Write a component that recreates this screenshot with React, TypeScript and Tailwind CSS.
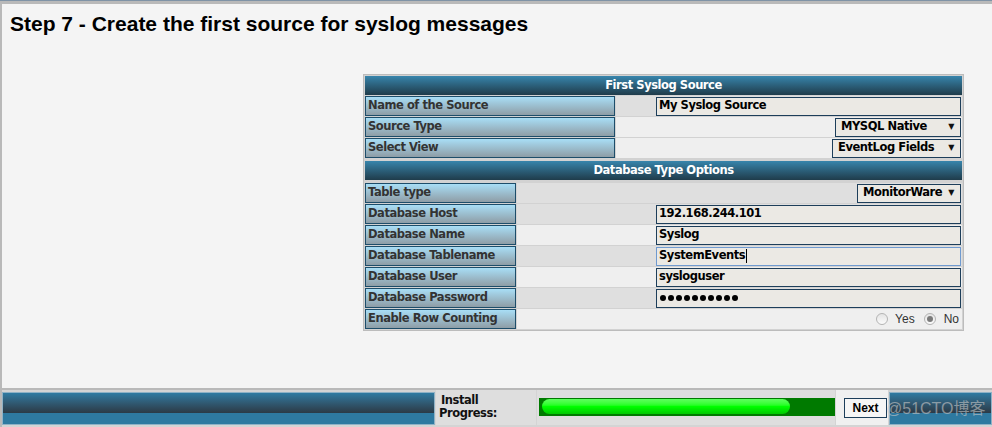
import React from "react";

const LBL = "font-['DejaVu_Sans',sans-serif] font-bold text-[11.5px] tracking-[-0.45px]";

function Header({ children }: { children: React.ReactNode }) {
  return (
    <div className={`h-[19px] flex items-center justify-center bg-linear-to-b from-[#3785ac] to-[#1f3c4b] text-white ${LBL}`}>
      {children}
    </div>
  );
}

function Row({
  label,
  narrow,
  dark,
  children,
}: {
  label: string;
  narrow?: boolean;
  dark?: boolean;
  children?: React.ReactNode;
}) {
  return (
    <div className="flex h-[20px] gap-px">
      <div
        className={`${narrow ? "w-[151px]" : "w-[250px]"} shrink-0 border border-[#1d4d6a] bg-linear-to-b from-[#a8def6] to-[#8e9da6] flex items-center pl-[2px] text-[#333] ${LBL}`}
      >
        {label}
      </div>
      <div className={`flex-1 ${dark ? "bg-[#dfdfdf]" : "bg-[#efefef]"} flex items-center justify-end pr-px`}>
        {children}
      </div>
    </div>
  );
}

function Field({ children, focus }: { children: React.ReactNode; focus?: boolean }) {
  return (
    <div
      className={`w-[305px] h-[19px] border ${focus ? "border-[#6f9ad0]" : "border-[#1d3e5a]"} bg-[#ebe9e4] flex items-center pl-[2px] text-black ${LBL}`}
    >
      {children}
    </div>
  );
}

function Select({ w, children }: { w: string; children: React.ReactNode }) {
  return (
    <div className={`${w} h-[19px] border border-[#1d3e5a] bg-[#ebe9e4] flex items-center justify-between pl-[5px] pr-[6px] text-black ${LBL}`}>
      <span>{children}</span>
      <span className="text-[8px] text-[#111]">▼</span>
    </div>
  );
}

function Radio({ checked }: { checked?: boolean }) {
  return (
    <div className="w-[12px] h-[12px] rounded-full border border-[#b4b4b4] bg-linear-to-b from-[#e4e4e4] to-[#fbfbfb] flex items-center justify-center">
      {checked && <div className="w-[6px] h-[6px] rounded-full bg-[#7a7a7a]" />}
    </div>
  );
}

function BlueBlock({ className }: { className: string }) {
  return (
    <div className={`${className} h-[33px] border border-[#8fb2c6] flex flex-col`}>
      <div className="h-[20px] bg-linear-to-b from-[#2f7ba2] to-[#2b3a46]" />
      <div className="flex-1 bg-[#2e79a0]" />
    </div>
  );
}

export default function App() {
  return (
    <div className="w-[992px] h-[427px] overflow-hidden bg-[#f4f4f4] relative">
      <div className="h-px bg-[#7f93a6]" />
      <div className="h-[3px] bg-[#b9b9b9]" />
      <div className="border-l-2 border-[#b9b9b9]">
        <div className="h-[384px] flex flex-col">
          <div className="pt-[8px] pl-[8px] h-[24px] box-content leading-[24px] font-['Liberation_Sans',Arial,sans-serif] font-bold text-[21px] text-black">
            Step 7 - Create the first source for syslog messages
          </div>
          <div className="ml-[361px] mt-[38px] w-[601px] border border-[#bcbcbc] bg-[#d2d2d2] p-px flex flex-col">
            <Header>First Syslog Source</Header>
            <div className="flex flex-col gap-px mt-px">
              <Row label="Name of the Source" dark>
                <Field>My Syslog Source</Field>
              </Row>
              <Row label="Source Type">
                <Select w="w-[126px]">MYSQL Native</Select>
              </Row>
              <Row label="Select View">
                <Select w="w-[129px]">EventLog Fields</Select>
              </Row>
            </div>
            <div className="mt-[3px]">
              <Header>Database Type Options</Header>
            </div>
            <div className="flex flex-col gap-px mt-[3px]">
              <Row label="Table type" narrow dark>
                <Select w="w-[104px]">MonitorWare</Select>
              </Row>
              <Row label="Database Host" narrow dark>
                <Field>192.168.244.101</Field>
              </Row>
              <Row label="Database Name" narrow>
                <Field>Syslog</Field>
              </Row>
              <Row label="Database Tablename" narrow dark>
                <Field focus>
                  SystemEvents<span className="inline-block w-px h-[14px] bg-black ml-px" />
                </Field>
              </Row>
              <Row label="Database User" narrow>
                <Field>sysloguser</Field>
              </Row>
              <Row label="Database Password" narrow dark>
                <Field>
                  <span className="flex gap-[2px] pl-[1px]">
                    {Array.from({ length: 10 }).map((_, i) => (
                      <span key={i} className="w-[6px] h-[6px] rounded-full bg-black" />
                    ))}
                  </span>
                </Field>
              </Row>
              <Row label="Enable Row Counting" narrow>
                <div className="flex items-center pr-[2px] font-['Liberation_Sans',Arial,sans-serif] text-[12px] text-[#333]">
                  <Radio />
                  <span className="ml-[7px]">Yes</span>
                  <span className="ml-[9px]"><Radio checked /></span>
                  <span className="ml-[8px]">No</span>
                </div>
              </Row>
            </div>
          </div>
        </div>
        <div className="h-[39px] border-t-2 border-[#b9b9b9] bg-[#d4d4d4] pt-[2px] flex gap-px">
          <BlueBlock className="w-[433px]" />
          <div className="w-[100px] h-[35px] -mt-[2px] pt-[4px] bg-[#dedede] pl-[5px] font-['DejaVu_Sans',sans-serif] font-bold text-[11.5px] tracking-[-0.45px] leading-[13px] text-[#111]">
            <div>Install</div>
            <div className="-ml-[2px]">Progress:</div>
          </div>
          <div className="w-[298px] h-[35px] -mt-[2px] bg-[#dedede] pl-[2px] pt-[8px]">
            <div className="w-[296px] h-[18px] bg-[#007a00] pl-[3px] pt-px">
              <div className="w-[248px] h-[15px] rounded-full bg-linear-to-b from-[#5cff5c] via-[#00ff00] to-[#00c800]" />
            </div>
          </div>
          <div className="w-[52px] h-[35px] -mt-[2px] bg-[#f0f0f0] pl-[8px] pt-[8px]">
            <div className="w-[43px] h-[20px] border border-[#1d3e5a] bg-[#f6f6f6] flex items-center justify-center font-['Liberation_Sans',Arial,sans-serif] font-bold text-[12px] text-black">
              Next
            </div>
          </div>
          <BlueBlock className="flex-1" />
        </div>
      </div>
      <div className="absolute left-[886px] top-[398px] font-['Liberation_Sans',Arial,sans-serif] text-[16px] leading-[18px] text-[#c8c8c8]/60 pointer-events-none">
        @51CTO<span className="font-['Noto_Sans_CJK_SC',sans-serif]">博客</span>
      </div>
    </div>
  );
}
